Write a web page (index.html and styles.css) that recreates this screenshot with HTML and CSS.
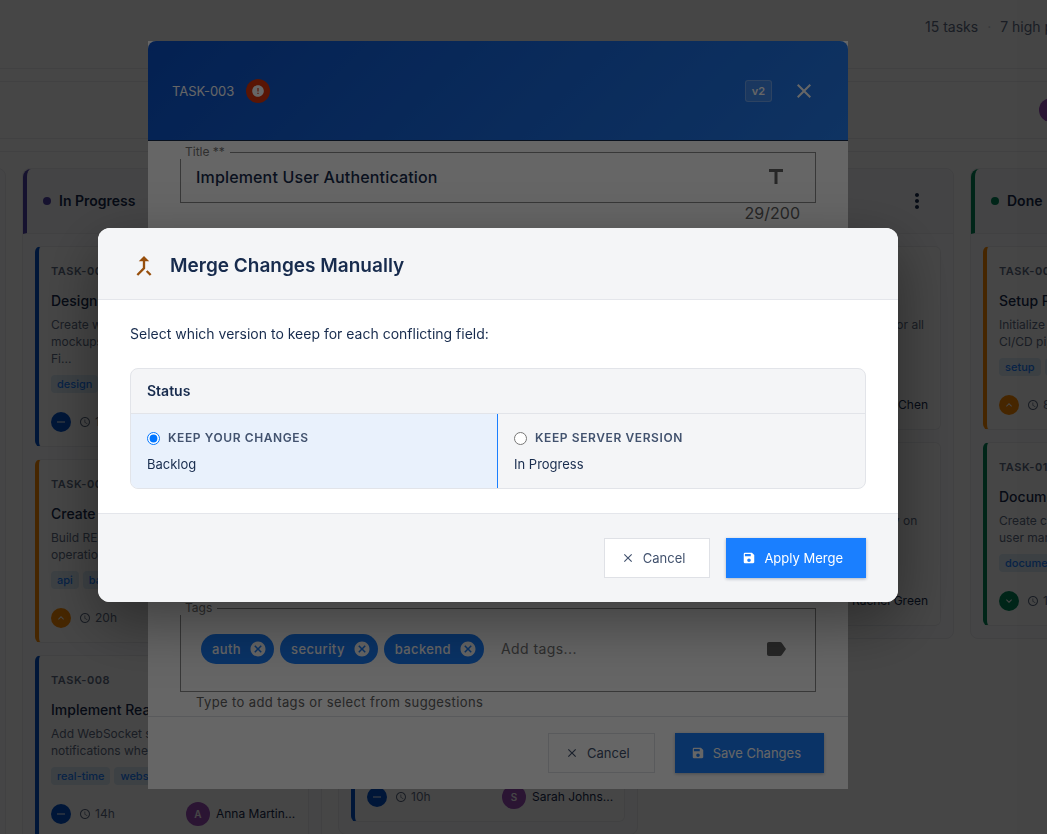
FILE: index.html
```html
<!DOCTYPE html>
<html lang="en">
<head>
<meta charset="utf-8">
<title>Task Board</title>
<link rel="stylesheet" href="styles.css">
</head>
<body>
<svg class="sprite" aria-hidden="true">
  <symbol id="i-close" viewBox="0 0 24 24"><path d="M19 6.41 17.59 5 12 10.59 6.41 5 5 6.41 10.59 12 5 17.59 6.41 19 12 13.41 17.59 19 19 17.59 13.41 12z"/></symbol>
  <symbol id="i-cancel" viewBox="0 0 24 24"><path d="M12 2C6.47 2 2 6.47 2 12s4.47 10 10 10 10-4.47 10-10S17.53 2 12 2zm5 13.59L15.59 17 12 13.41 8.41 17 7 15.59 10.59 12 7 8.41 8.41 7 12 10.59 15.59 7 17 8.41 13.41 12 17 15.59z"/></symbol>
  <symbol id="i-save" viewBox="0 0 24 24"><path d="M17 3H5a2 2 0 0 0-2 2v14a2 2 0 0 0 2 2h14c1.1 0 2-.9 2-2V7l-4-4zm-5 16c-1.66 0-3-1.34-3-3s1.34-3 3-3 3 1.34 3 3-1.34 3-3 3zm3-10H5V5h10v4z"/></symbol>
  <symbol id="i-error" viewBox="0 0 24 24"><path d="M12 2C6.48 2 2 6.48 2 12s4.48 10 10 10 10-4.48 10-10S17.52 2 12 2zm1 15h-2v-2h2v2zm0-4h-2V7h2v6z"/></symbol>
  <symbol id="i-merge" viewBox="0 0 24 24"><path d="M17 20.41 18.41 19 15 15.59 13.59 17 17 20.41zM7.5 8H11v5.59L5.59 19 7 20.41l6-6V8h3.5L12 3.5 7.5 8z"/></symbol>
  <symbol id="i-title" viewBox="0 0 24 24"><path d="M5 4v3h5.5v12h3V7H19V4z"/></symbol>
  <symbol id="i-label" viewBox="0 0 24 24"><path d="M17.63 5.84C17.27 5.33 16.67 5 16 5L5 5.01C3.9 5.01 3 5.9 3 7v10c0 1.1.9 1.99 2 1.99L16 19c.67 0 1.27-.33 1.63-.84L22 12l-4.37-6.16z"/></symbol>
  <symbol id="i-clock" viewBox="0 0 24 24"><path d="M11.99 2C6.47 2 2 6.48 2 12s4.47 10 9.99 10C17.52 22 22 17.52 22 12S17.52 2 11.99 2zM12 20c-4.42 0-8-3.58-8-8s3.58-8 8-8 8 3.58 8 8-3.58 8-8 8zm.5-13H11v6l5.25 3.15.75-1.23-4.5-2.67z"/></symbol>
  <symbol id="i-minus" viewBox="0 0 24 24"><path d="M4 11h16v2H4z"/></symbol>
  <symbol id="i-up" viewBox="0 0 24 24"><path d="M7.41 15.41 12 10.83l4.59 4.58L18 14l-6-6-6 6z"/></symbol>
  <symbol id="i-down" viewBox="0 0 24 24"><path d="M7.41 8.59 12 13.17l4.59-4.58L18 10l-6 6-6-6z"/></symbol>
  <symbol id="i-more" viewBox="0 0 24 24"><path d="M12 8c1.1 0 2-.9 2-2s-.9-2-2-2-2 .9-2 2 .9 2 2 2zm0 2c-1.1 0-2 .9-2 2s.9 2 2 2 2-.9 2-2-.9-2-2-2zm0 6c-1.1 0-2 .9-2 2s.9 2 2 2 2-.9 2-2-.9-2-2-2z"/></symbol>
</svg>

<div class="app">
  <header class="app-bar">
    <span>15 tasks</span><span class="sep">·</span><span>7 high priority</span>
  </header>
  <div class="toolbar"><span class="avatar"></span></div>

  <main class="board">
    <section class="column"></section>

    <section class="column progress">
      <header class="column-head"><i class="dot"></i><h2>In Progress</h2></header>
      <div class="cards">
        <article class="card medium">
          <div class="card-id">TASK-004</div>
          <h3>Design</h3>
          <p>Create wire <br>mockups <br>Fi...</p>
          <div class="labels"><span>design</span></div>
          <footer><b class="prio"><svg><use href="#i-minus"/></svg></b><svg class="clock"><use href="#i-clock"/></svg><span>16h</span></footer>
        </article>
        <article class="card high">
          <div class="card-id">TASK-005</div>
          <h3>Create API</h3>
          <p>Build REST <br>operations</p>
          <div class="labels"><span>api</span><span>backend</span></div>
          <footer><b class="prio"><svg><use href="#i-up"/></svg></b><svg class="clock"><use href="#i-clock"/></svg><span>20h</span></footer>
        </article>
        <article class="card medium">
          <div class="card-id">TASK-008</div>
          <h3>Implement Real-time</h3>
          <p>Add WebSocket support <br>notifications when</p>
          <div class="labels"><span>real-time</span><span>websocket</span></div>
          <footer><b class="prio"><svg><use href="#i-minus"/></svg></b><svg class="clock"><use href="#i-clock"/></svg><span>14h</span><span class="avatar">A</span><span class="who">Anna Martin...</span></footer>
        </article>
      </div>
    </section>

    <section class="column">
      <header class="column-head"></header>
      <div class="cards">
        <article class="card medium"></article>
        <article class="card medium"></article>
        <article class="card medium">
          <footer><b class="prio"><svg><use href="#i-minus"/></svg></b><svg class="clock"><use href="#i-clock"/></svg><span>10h</span><span class="avatar">S</span><span class="who">Sarah Johns...</span></footer>
        </article>
      </div>
    </section>

    <section class="column">
      <header class="column-head"><button class="more" aria-label="Column menu"><svg><use href="#i-more"/></svg></button></header>
      <div class="cards">
        <article class="card medium side">
          <p>for all</p>
          <footer><span class="who">Mike Chen</span></footer>
        </article>
        <article class="card medium side">
          <p>y on&nbsp;&nbsp;</p>
          <footer><span class="who">Rachel Green</span></footer>
        </article>
      </div>
    </section>

    <section class="column done">
      <header class="column-head"><i class="dot"></i><h2>Done</h2></header>
      <div class="cards">
        <article class="card high">
          <div class="card-id">TASK-001</div>
          <h3>Setup Project</h3>
          <p>Initialize project <br>CI/CD pipeline</p>
          <div class="labels"><span>setup</span><span>devops</span></div>
          <footer><b class="prio"><svg><use href="#i-up"/></svg></b><svg class="clock"><use href="#i-clock"/></svg><span>8h</span></footer>
        </article>
        <article class="card low">
          <div class="card-id">TASK-015</div>
          <h3>Documentation</h3>
          <p>Create complete <br>user manual</p>
          <div class="labels"><span>documentation</span></div>
          <footer><b class="prio"><svg><use href="#i-down"/></svg></b><svg class="clock"><use href="#i-clock"/></svg><span>12h</span></footer>
        </article>
      </div>
    </section>
  </main>
</div>

<div class="overlay overlay-edit">
  <div class="edit" role="dialog" aria-label="Edit task">
    <header class="edit-head">
      <span>TASK-003</span>
      <b class="critical"><svg><use href="#i-error"/></svg></b>
      <span class="version">v2</span>
      <button class="close" aria-label="Close"><svg><use href="#i-close"/></svg></button>
    </header>
    <div class="edit-body">
      <div>
        <fieldset class="field">
          <legend><label for="title">Title **</label></legend>
          <input id="title" class="title-input" value="Implement User Authentication">
          <svg><use href="#i-title"/></svg>
        </fieldset>
        <div class="counter">29/200</div>
      </div>
      <div>
        <fieldset class="field tags">
          <legend><label for="tags">Tags</label></legend>
          <span class="chip">auth<button aria-label="Remove auth"><svg><use href="#i-cancel"/></svg></button></span>
          <span class="chip">security<button aria-label="Remove security"><svg><use href="#i-cancel"/></svg></button></span>
          <span class="chip">backend<button aria-label="Remove backend"><svg><use href="#i-cancel"/></svg></button></span>
          <input id="tags" placeholder="Add tags...">
          <svg><use href="#i-label"/></svg>
        </fieldset>
        <div class="hint">Type to add tags or select from suggestions</div>
      </div>
    </div>
    <footer class="edit-foot">
      <button class="btn"><svg><use href="#i-close"/></svg>Cancel</button>
      <button class="btn primary"><svg><use href="#i-save"/></svg>Save Changes</button>
    </footer>
  </div>
</div>

<div class="overlay overlay-merge">
  <div class="merge" role="dialog" aria-labelledby="merge-title">
    <header class="merge-head">
      <svg><use href="#i-merge"/></svg>
      <h1 id="merge-title">Merge Changes Manually</h1>
    </header>
    <div class="merge-body">
      <p>Select which version to keep for each conflicting field:</p>
      <section class="conflict">
        <h2>Status</h2>
        <div class="options">
          <label class="option selected">
            <span class="option-name"><input type="radio" name="status" checked>Keep your changes</span>
            <span class="option-value">Backlog</span>
          </label>
          <label class="option">
            <span class="option-name"><input type="radio" name="status">Keep server version</span>
            <span class="option-value">In Progress</span>
          </label>
        </div>
      </section>
    </div>
    <footer class="merge-foot">
      <button class="btn"><svg><use href="#i-close"/></svg>Cancel</button>
      <button class="btn primary"><svg><use href="#i-save"/></svg>Apply Merge</button>
    </footer>
  </div>
</div>
</body>
</html>
```

FILE: styles.css
```css
* { box-sizing: border-box; }

body {
  margin: 0;
  height: 100vh;
  overflow: hidden;
  background: #fff;
  color: #172b4d;
  font: 14px/20px Inter, "Liberation Sans", sans-serif;
}

h1, h2, h3, p { margin: 0; }
button, input { font: inherit; color: inherit; }
svg { flex: none; fill: currentColor; }
.sprite { display: none; }

/* Board */
.app { width: calc(100% + 73px); }

.app-bar {
  display: flex;
  justify-content: flex-end;
  align-items: center;
  gap: 9px;
  height: 69px;
  padding: 0 28px 14px 24px;
  border-bottom: 1px solid #ebecf0;
  color: #5e6c84;
}
.sep { color: #c1c7d0; }

.toolbar {
  display: flex;
  justify-content: flex-end;
  align-items: center;
  height: 58px;
  margin: 12px 0;
  padding-right: 57px;
  border: solid #ebecf0;
  border-width: 1px 0;
}

.board {
  display: flex;
  align-items: flex-start;
  gap: 16px;
  margin-left: -294px;
  padding-top: 16px;
  border-top: 1px solid #ebecf0;
}

.column {
  flex: none;
  width: 300px;
  min-height: 470px;
  border: 1px solid #ebecf0;
  border-radius: 8px;
  background: #fcfcfd;
}
.column:first-child { min-height: 700px; }

.column-head {
  display: flex;
  align-items: center;
  gap: 8px;
  height: 65px;
  padding: 0 20px;
  border-bottom: 1px solid #ebecf0;
  border-radius: 8px 8px 0 0;
  background: #f7f8f9;
}
.column-head h2 { font-size: 14px; font-weight: 600; }
.progress .column-head, .done .column-head {
  padding-left: 16px;
  border-left: 4px solid #5243aa;
}
.done .column-head { border-left-color: #00875a; }
.dot { width: 8px; height: 8px; border-radius: 4px; background: #5243aa; }
.done .dot { background: #00875a; }

.more {
  display: flex;
  margin-left: auto;
  margin-right: 4px;
  padding: 0;
  border: 0;
  background: none;
}
.more svg { width: 24px; height: 24px; }

.cards { display: flex; flex-direction: column; gap: 12px; padding: 12px; }

.card {
  display: flex;
  flex-direction: column;
  min-height: 184px;
  padding: 16px 8px 12px 12px;
  border: 1px solid #ebecf0;
  border-left: 4px solid #0052cc;
  border-radius: 6px;
  background: #fff;
}
.card.high { border-left-color: #ff8b00; }
.card.low { border-left-color: #00875a; }
.card.side { padding-right: 12px; }

.card-id { color: #5e6c84; font-size: 11px; line-height: 16px; font-weight: 600; letter-spacing: .05em; }
.card h3 { margin-top: 12px; font-size: 14px; font-weight: 500; white-space: nowrap; }
.card p { margin-top: 5px; color: #5e6c84; font-size: 12px; line-height: 17px; white-space: nowrap; }
.card.side p { margin-top: 53px; padding-right: 4px; text-align: right; }

.labels { display: flex; gap: 4px; margin-top: 8px; margin-bottom: 17px; }
.labels span {
  padding: 0 6px;
  border-radius: 4px;
  background: #dcecf8;
  color: #1a7fff;
  font-size: 11px;
  line-height: 18px;
  font-weight: 500;
}

.card footer {
  display: flex;
  align-items: center;
  height: 24px;
  margin-top: auto;
  color: #5e6c84;
  font-size: 12px;
}
.prio {
  display: flex;
  align-items: center;
  justify-content: center;
  width: 20px;
  height: 20px;
  border-radius: 10px;
  background: #0052cc;
  color: #fff;
}
.prio svg { width: 12px; height: 12px; }
.high .prio { background: #ff8b00; }
.low .prio { background: #00875a; }
.clock { width: 12px; height: 12px; margin: 0 4px 0 8px; }

.avatar {
  display: flex;
  align-items: center;
  justify-content: center;
  width: 24px;
  height: 24px;
  margin-left: auto;
  border-radius: 50%;
  background: #9c4dbb;
  color: #fff;
  font-size: 10px;
  font-weight: 600;
}
.who {
  width: 84px;
  margin-left: 6px;
  color: #172b4d;
  font-size: 12px;
  white-space: nowrap;
}
.side .who { width: auto; margin-left: auto; }

/* Overlays */
.overlay {
  position: fixed;
  inset: 0;
  display: flex;
  align-items: center;
  justify-content: center;
  padding: 0 51px 4px 0;
}
.overlay-edit { background: rgba(0, 0, 0, .32); }
.overlay-merge { background: rgba(0, 0, 0, .6); }

.btn {
  display: flex;
  align-items: center;
  gap: 8px;
  height: 40px;
  padding: 0 24px 0 16px;
  border: 1px solid #dfe1e6;
  background: #fff;
  color: #42526e;
  font-size: 13px;
}
.btn svg { width: 14px; height: 14px; }
.btn.primary {
  padding: 0 22px 0 15px;
  border-color: #1a7fff;
  background: #1a7fff;
  color: #fff;
  box-shadow: 0 1px 3px rgba(9, 30, 66, .3);
}

/* Task editor */
.edit {
  display: flex;
  flex-direction: column;
  width: 700px;
  max-width: 90%;
  height: calc(100% - 82px);
  background: #fff;
}
.edit-head {
  display: flex;
  align-items: center;
  height: 100px;
  padding: 0 32px 0 24px;
  border-bottom: 1px solid #172b4d;
  border-radius: 8px 8px 0 0;
  background: linear-gradient(135deg, #0a52cc, #2680f5);
  color: #fff;
  font-size: 13px;
}
.critical {
  display: flex;
  align-items: center;
  justify-content: center;
  width: 24px;
  height: 24px;
  margin-left: 12px;
  border-radius: 12px;
  background: #de350b;
}
.critical svg { width: 14px; height: 14px; }
.version {
  margin-left: auto;
  padding: 0 6px;
  border: 1px solid rgba(255, 255, 255, .25);
  border-radius: 3px;
  background: rgba(255, 255, 255, .15);
  font-size: 11px;
  font-weight: 600;
}
.close { display: flex; margin-left: 20px; padding: 0; border: 0; background: none; }
.close svg { width: 24px; height: 24px; }

.edit-body {
  display: flex;
  flex: 1;
  flex-direction: column;
  justify-content: space-between;
  padding: 4px 32px;
}
.field {
  display: flex;
  align-items: center;
  height: 58px;
  margin: 0;
  padding: 0 27px 8px 15px;
  border: 1px solid #8c8c8c;
}
.field legend {
  margin-left: -16px;
  padding: 0 5px;
  color: #757575;
  font-size: 12px;
  line-height: 14px;
}
.field input {
  flex: 1;
  min-width: 0;
  padding: 0;
  border: 0;
  outline: 0;
  background: none;
  letter-spacing: .01em;
}
.field > svg { width: 24px; height: 24px; color: #616161; }
.field .title-input { font-size: 16px; font-weight: 500; }
.counter { padding-right: 16px; color: #616161; font-size: 16px; text-align: right; }

.field.tags { gap: 6px; height: 91px; padding-left: 20px; }
.field.tags legend { margin-left: -21px; }
.chip {
  display: flex;
  align-items: center;
  gap: 8px;
  height: 30px;
  padding: 0 7px 0 11px;
  border-radius: 15px;
  background: #1a7fff;
  color: #fff;
  font-size: 13px;
  font-weight: 500;
  letter-spacing: .03em;
}
.chip button { display: flex; padding: 0; border: 0; background: none; }
.chip svg { width: 18px; height: 18px; }
.field.tags input { margin-left: 11px; letter-spacing: .03em; }
.hint { padding-left: 16px; color: #616161; font-size: 13px; letter-spacing: .03em; }

.edit-foot {
  display: flex;
  justify-content: flex-end;
  gap: 20px;
  padding: 16px 24px;
  border-top: 1px solid #dfe1e6;
}

/* Merge dialog */
.merge {
  width: 800px;
  max-width: 94%;
  overflow: hidden;
  border-radius: 12px;
  background: #fff;
  box-shadow: 0 20px 60px rgba(0, 0, 0, .4);
}
.merge-head {
  display: flex;
  align-items: center;
  gap: 12px;
  padding: 24px 32px 19px;
  border-bottom: 1px solid #e4e6eb;
  background: #f4f5f7;
}
.merge-head svg { width: 28px; height: 28px; color: #974f0c; }
.merge-head h1 { font-size: 19px; line-height: 28px; font-weight: 600; }

.merge-body { padding: 24px 32px; }
.conflict {
  margin-top: 24px;
  overflow: hidden;
  border: 1px solid #e2e4e9;
  border-radius: 8px;
  background: #f4f5f7;
}
.conflict h2 {
  padding: 12px 16px;
  border-bottom: 1px solid #e2e4e9;
  font-size: 14px;
  font-weight: 600;
}
.options { display: grid; grid-template-columns: 1fr 1fr; }
.option { display: flex; flex-direction: column; gap: 6px; padding: 14px 16px; }
.option.selected { border-right: 1px solid #1a7fff; background: #e9f1fc; }
.option-name {
  display: flex;
  align-items: center;
  gap: 8px;
  color: #42526e;
  font-size: 12px;
  font-weight: 600;
  letter-spacing: .05em;
  text-transform: uppercase;
}
.option-name input { width: 13px; height: 13px; margin: 0; }
.option-value { font-size: 13px; }

.merge-foot {
  display: flex;
  justify-content: flex-end;
  gap: 16px;
  padding: 24px 32px;
  border-top: 1px solid #e4e6eb;
  background: #f4f5f7;
}
```
